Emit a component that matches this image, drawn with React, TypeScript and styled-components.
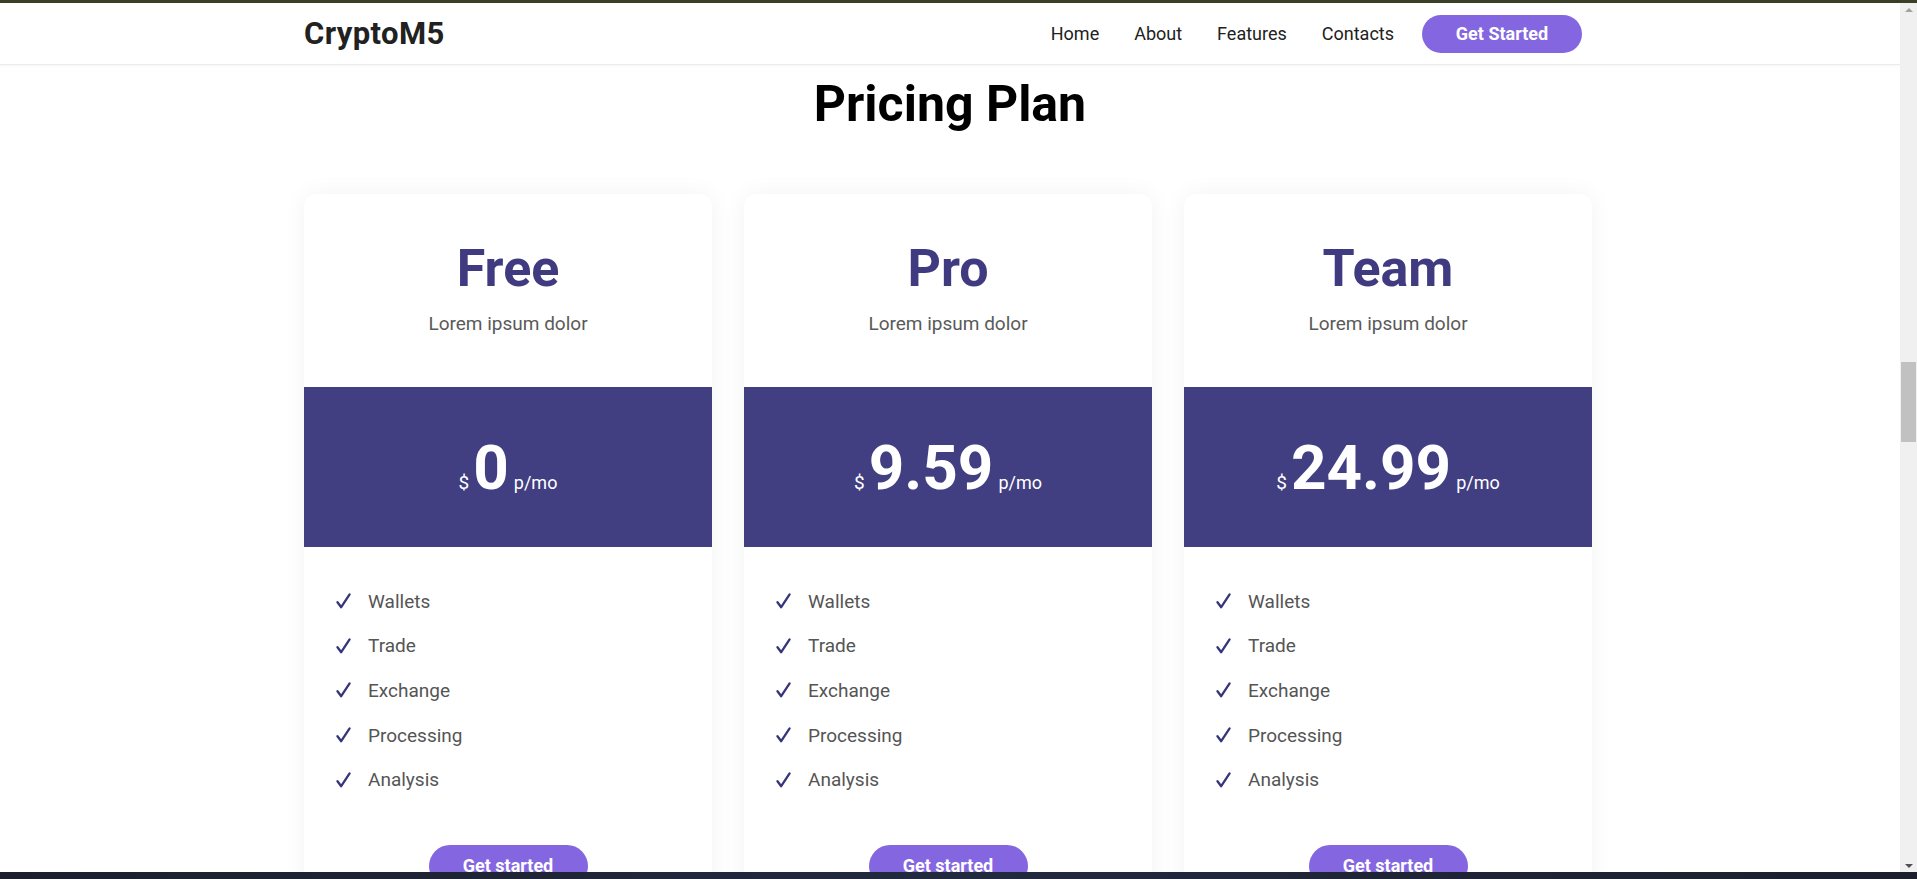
import React from "react";
import styled, { createGlobalStyle } from "styled-components";

const GlobalStyle = createGlobalStyle`
  html, body {
    margin: 0;
    padding: 0;
    height: 100%;
    overflow: hidden;
    background: #ffffff;
  }
  body {
    font-family: Roboto, "Liberation Sans", Arial, sans-serif;
    -webkit-font-smoothing: antialiased;
  }
  * { box-sizing: border-box; }
`;

const Frame = styled.div`
  height: 100vh;
  display: flex;
  flex-direction: column;
`;

const TopStrip = styled.div`
  height: 3px;
  flex: none;
  background: #3b3f26;
`;

const BottomStrip = styled.div`
  height: 7px;
  flex: none;
  background: linear-gradient(90deg, #1b1f2c, #222a3f 50%, #1b1f2c);
`;

const Middle = styled.div`
  flex: 1;
  min-height: 0;
  display: flex;
`;

const Viewport = styled.div`
  flex: 1;
  min-width: 0;
  overflow: hidden;
  background: #ffffff;
`;

const ScrollTrack = styled.div`
  width: 17px;
  flex: none;
  background: #f0f0f0;
  display: flex;
  flex-direction: column;
  align-items: center;
  padding: 5px 0 4px;
`;

const ScrollThumb = styled.div`
  width: 15px;
  height: 80px;
  margin-top: 350px;
  background: #c1c1c1;
`;

const Spacer = styled.div`
  flex: 1;
`;

const Arrow = styled.div<{ $down?: boolean }>`
  width: 0;
  height: 0;
  border-left: 4px solid transparent;
  border-right: 4px solid transparent;
  ${(p) =>
    p.$down
      ? "border-top: 4px solid #505050;"
      : "border-bottom: 4px solid #a3a3a3;"}
`;

const Header = styled.header`
  height: 62px;
  background: #ffffff;
  border-bottom: 1px solid #ebebeb;
  box-shadow: 0 1px 3px rgba(0, 0, 0, 0.04);
`;

const Container = styled.div`
  width: 1292px;
  padding-right: 4px;
  margin: 0 auto;
`;

const HeaderInner = styled(Container)`
  height: 100%;
  display: flex;
  align-items: center;
  justify-content: space-between;
`;

const Logo = styled.div`
  font-size: 31px;
  font-weight: 700;
  color: #212121;
  letter-spacing: 0.4px;
`;

const Nav = styled.nav`
  display: flex;
  align-items: center;
  margin-right: 10px;
`;

const NavLink = styled.a`
  font-size: 18px;
  color: #212121;
  text-decoration: none;
  margin-right: 35px;
  &:last-of-type {
    margin-right: 28px;
  }
`;

const PillButton = styled.button<{ $w: number; $h: number; $size: number }>`
  width: ${(p) => p.$w}px;
  height: ${(p) => p.$h}px;
  border: none;
  border-radius: 999px;
  background: #8566e1;
  color: #ffffff;
  font-family: inherit;
  font-weight: 700;
  font-size: ${(p) => p.$size}px;
  cursor: pointer;
`;

const Section = styled.section`
  padding-top: 9px;
`;

const Heading = styled.h1`
  margin: 0;
  text-align: center;
  font-size: 50px;
  line-height: 60px;
  font-weight: 700;
  color: #000000;
`;

const Grid = styled(Container)`
  display: grid;
  grid-template-columns: repeat(3, 1fr);
  gap: 32px;
  margin-top: 60px;
`;

const Card = styled.div`
  background: #ffffff;
  border-radius: 12px;
  box-shadow: 0 0 24px rgba(0, 0, 0, 0.05);
  overflow: hidden;
  padding-bottom: 40px;
`;

const CardTop = styled.div`
  padding: 45px 0 50px;
  text-align: center;
`;

const PlanName = styled.h2`
  margin: 0;
  font-size: 52px;
  line-height: 60px;
  font-weight: 700;
  color: #403b80;
`;

const PlanSub = styled.p`
  margin: 11px 0 0;
  font-size: 19px;
  line-height: 27px;
  color: #5a5a5a;
`;

const PriceBand = styled.div`
  height: 160px;
  background: #413f82;
  color: #ffffff;
  display: flex;
  align-items: center;
  justify-content: center;
`;

const PriceLine = styled.div`
  display: flex;
  align-items: baseline;
  margin-top: 2px;
`;

const Currency = styled.span`
  font-size: 19px;
  margin-right: 4px;
`;

const Amount = styled.span`
  font-size: 62px;
  font-weight: 700;
  line-height: 1;
`;

const Period = styled.span`
  font-size: 18px;
  margin-left: 5px;
`;

const Features = styled.ul`
  list-style: none;
  margin: 0;
  padding: 32px 0 0 32px;
`;

const Feature = styled.li`
  height: 44.6px;
  display: flex;
  align-items: center;
  font-size: 19px;
  color: #555555;
`;

const Check = styled.svg`
  width: 15px;
  height: 16px;
  margin-right: 17px;
  flex: none;
`;

const CardAction = styled.div`
  display: flex;
  justify-content: center;
  margin-top: 43px;
`;

const plans = [
  { name: "Free", price: "0" },
  { name: "Pro", price: "9.59" },
  { name: "Team", price: "24.99" },
];

const features = ["Wallets", "Trade", "Exchange", "Processing", "Analysis"];

const CheckIcon = () => (
  <Check viewBox="0 0 15 16">
    <path
      d="M1.5 9.2 L5.2 14.2 L13.6 1.4"
      fill="none"
      stroke="#36357a"
      strokeWidth="2.3"
      strokeLinecap="round"
      strokeLinejoin="round"
    />
  </Check>
);

export default function App() {
  return (
    <>
      <GlobalStyle />
      <Frame>
        <TopStrip />
        <Middle>
          <Viewport>
            <Header>
              <HeaderInner>
                <Logo>CryptoM5</Logo>
                <Nav>
                  <NavLink href="#">Home</NavLink>
                  <NavLink href="#">About</NavLink>
                  <NavLink href="#">Features</NavLink>
                  <NavLink href="#">Contacts</NavLink>
                  <PillButton $w={160} $h={38} $size={18}>
                    Get Started
                  </PillButton>
                </Nav>
              </HeaderInner>
            </Header>
            <Section>
              <Heading>Pricing Plan</Heading>
              <Grid>
                {plans.map((p) => (
                  <Card key={p.name}>
                    <CardTop>
                      <PlanName>{p.name}</PlanName>
                      <PlanSub>Lorem ipsum dolor</PlanSub>
                    </CardTop>
                    <PriceBand>
                      <PriceLine>
                        <Currency>$</Currency>
                        <Amount>{p.price}</Amount>
                        <Period>p/mo</Period>
                      </PriceLine>
                    </PriceBand>
                    <Features>
                      {features.map((f) => (
                        <Feature key={f}>
                          <CheckIcon />
                          {f}
                        </Feature>
                      ))}
                    </Features>
                    <CardAction>
                      <PillButton $w={159} $h={42} $size={18}>
                        Get started
                      </PillButton>
                    </CardAction>
                  </Card>
                ))}
              </Grid>
            </Section>
          </Viewport>
          <ScrollTrack>
            <Arrow />
            <ScrollThumb />
            <Spacer />
            <Arrow $down />
          </ScrollTrack>
        </Middle>
        <BottomStrip />
      </Frame>
    </>
  );
}
